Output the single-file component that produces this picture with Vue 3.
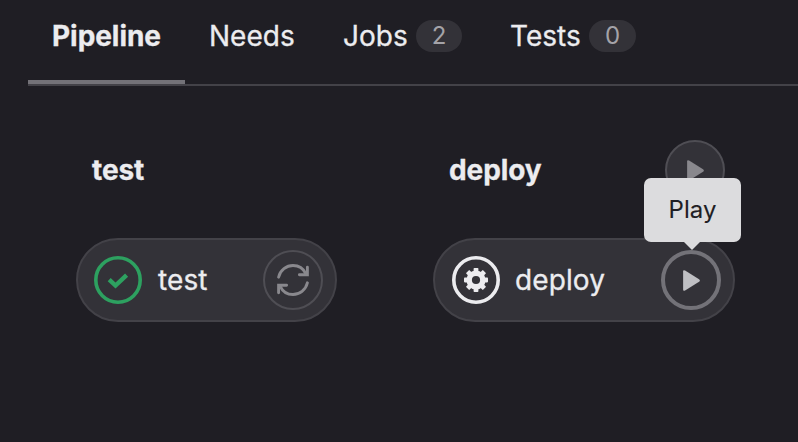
<script setup>
const tabs = [
  { name: 'Pipeline', active: true },
  { name: 'Needs' },
  { name: 'Jobs', count: 2 },
  { name: 'Tests', count: 0 },
]
</script>

<template>
  <main class="page">
    <nav class="tabs">
      <a v-for="tab in tabs" :key="tab.name" class="tab" :class="{ active: tab.active }">
        <span class="label" :class="tab.name.toLowerCase()">{{ tab.name }}</span>
        <span v-if="tab.count !== undefined" class="badge">{{ tab.count }}</span>
      </a>
    </nav>

    <section class="graph">
      <div class="stage stage-test">
        <header class="stage-head"><h2>test</h2></header>
        <div class="job">
          <svg class="status" viewBox="0 0 48 48">
            <circle cx="24" cy="24" r="22.2" fill="none" stroke="#2da160" stroke-width="3.6" />
            <path d="M15.2 23.7l6.3 5.9 11.1-10.5" fill="none" stroke="#2da160" stroke-width="4.4" stroke-linejoin="miter" />
          </svg>
          <span class="job-name">test</span>
          <button class="action" aria-label="Retry">
            <svg width="32" height="32" viewBox="0 0 32 32" fill="none" stroke="#89888d" stroke-width="2.9" stroke-linecap="round" stroke-linejoin="round">
              <path d="M1.6 13.2C3.2 6 9.5 1.5 16 1.5c5.6 0 10.4 3.1 12.8 8.2" />
              <path d="M30.4 3.2v7.5h-8" stroke-linejoin="miter" />
              <path d="M30.4 18.8C28.8 26 22.5 30.5 16 30.5c-5.6 0-10.4-3.1-12.8-8.2" />
              <path d="M1.6 28.8v-7.5h8" stroke-linejoin="miter" />
            </svg>
          </button>
        </div>
      </div>

      <div class="stage stage-deploy">
        <header class="stage-head">
          <h2>deploy</h2>
          <button class="action" aria-label="Run stage">
            <svg width="17" height="21" viewBox="0 0 16 20"><path d="M0 1.5Q0-.6 1.9.5L15.2 8.8Q16.8 10 15.2 11.2L1.9 19.5Q0 20.6 0 18.5Z" fill="#89888d" /></svg>
          </button>
        </header>
        <div class="job">
          <svg class="status" viewBox="0 0 48 48">
            <circle cx="24" cy="24" r="22.2" fill="none" stroke="#ececef" stroke-width="3.6" />
            <g fill="#ececef">
              <rect v-for="n in 4" :key="n" x="21.6" y="12" width="4.8" height="24" rx=".8" :transform="`rotate(${n * 45} 24 24)`" />
              <circle cx="24" cy="24" r="9.6" />
            </g>
            <circle cx="24" cy="24" r="4.1" fill="#333238" />
          </svg>
          <span class="job-name">deploy</span>
          <button class="action focused" aria-label="Play job">
            <svg width="17" height="21" viewBox="0 0 16 20"><path d="M0 1.5Q0-.6 1.9.5L15.2 8.8Q16.8 10 15.2 11.2L1.9 19.5Q0 20.6 0 18.5Z" fill="#bfbfc3" /></svg>
            <span class="tooltip">Play</span>
          </button>
        </div>
      </div>
    </section>
  </main>
</template>

<style>
body {
  margin: 0;
  background: #1f1e24;
}
</style>

<style scoped>
.page {
  box-sizing: border-box;
  height: 442px;
  overflow: hidden;
  background: #1f1e24;
  color: #ececef;
  font-family: Inter, "Liberation Sans", sans-serif;
  font-size: 28px;
  line-height: 40px;
  -webkit-text-stroke: 0.3px currentColor;
}
.tabs {
  display: flex;
  box-sizing: border-box;
  height: 86px;
  margin-left: 28px;
  border-bottom: 2px solid #434248;
}
.tab {
  display: flex;
  box-sizing: border-box;
  height: 84px;
  padding: 16px 24px 24px;
  align-items: flex-start;
}
.active {
  border-bottom: 4px solid #737278;
  font-weight: 700;
}
.label {
  white-space: nowrap;
}
.pipeline { width: 109px; letter-spacing: -0.05px; }
.needs { width: 86px; letter-spacing: 0; }
.jobs { width: 64px; letter-spacing: 0; }
.tests { width: 70px; letter-spacing: 0; }
.badge {
  width: 46px;
  height: 32px;
  margin: 4px 0 0 9px;
  border-radius: 16px;
  background: #333238;
  color: #a4a3a8;
  font-size: 24px;
  line-height: 32px;
  text-align: center;
  -webkit-text-stroke-width: 0;
}
.tests + .badge {
  width: 47px;
}
.graph {
  display: flex;
  gap: 96px;
  padding: 54px 0 0 76px;
}
.stage-test { width: 261px; }
.stage-deploy { width: 302px; }
.stage-head {
  display: flex;
  height: 60px;
  margin-bottom: 38px;
  padding: 0 10px 0 16px;
  align-items: center;
  justify-content: space-between;
}
h2 {
  margin: 0;
  font-size: 28px;
  font-weight: 700;
  letter-spacing: -0.1px;
}
.job {
  display: flex;
  box-sizing: border-box;
  height: 84px;
  padding: 0 12px 0 16px;
  align-items: center;
  border: 2px solid #434248;
  border-radius: 42px;
  background: #333238;
}
.stage-deploy .job {
  padding-left: 17px;
}
.status {
  width: 48px;
  height: 48px;
}
.job-name {
  flex: 1;
  padding-left: 15px;
  letter-spacing: 0.1px;
}
.stage-test .job-name {
  padding-left: 16px;
}
.action {
  position: relative;
  display: flex;
  box-sizing: border-box;
  width: 60px;
  height: 60px;
  padding: 0;
  align-items: center;
  justify-content: center;
  border: 2px solid #4f4e54;
  border-radius: 50%;
  background: #333238;
  color: inherit;
  font: inherit;
}
.focused {
  border: 4px solid #737278;
}
.tooltip {
  position: absolute;
  left: -21px;
  bottom: 64px;
  width: 97px;
  height: 64px;
  border-radius: 7px;
  background: #dcdcde;
  color: #1f1e24;
  font-size: 24px;
  line-height: 64px;
  text-align: center;
  -webkit-text-stroke-width: 0.1px;
}
.tooltip::after {
  content: "";
  position: absolute;
  top: 64px;
  left: 40px;
  border: 8px solid transparent;
  border-top-color: #dcdcde;
  border-bottom-width: 0;
}
</style>
